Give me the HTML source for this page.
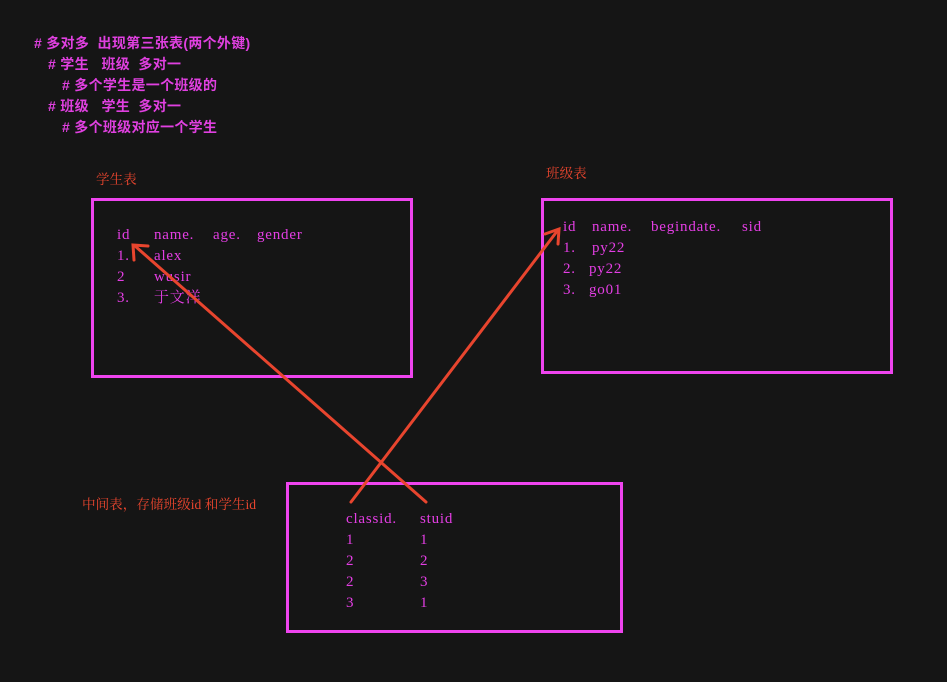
<!DOCTYPE html>
<html><head><meta charset="utf-8"><style>
body{margin:0;width:947px;height:682px;background:#151515;position:relative;overflow:hidden;font-family:"Liberation Serif","Noto Serif CJK SC",serif;}
.t{position:absolute;color:#e43ee4;font-size:15px;letter-spacing:0.8px;white-space:pre;line-height:16px;}
.c{position:absolute;color:#e040e0;font-size:14px;white-space:pre;line-height:16px;font-family:"Liberation Sans","Noto Sans CJK SC",sans-serif;font-weight:bold;letter-spacing:0.3px}
.r{position:absolute;color:#e8452e;font-size:13.6px;white-space:pre;line-height:16px;font-family:"Liberation Serif","Noto Serif CJK SC",serif;}
.box{position:absolute;border:3px solid #ee44ee;box-sizing:border-box;}
</style></head><body>
<div class="c" style="left:34px;top:35px"># 多对多  出现第三张表(两个外键)</div>
<div class="c" style="left:48px;top:56px"># 学生   班级  多对一</div>
<div class="c" style="left:62px;top:77px"># 多个学生是一个班级的</div>
<div class="c" style="left:48px;top:98px"># 班级   学生  多对一</div>
<div class="c" style="left:62px;top:119px"># 多个班级对应一个学生</div>

<div class="r" style="left:96px;top:172px">学生表</div>
<div class="r" style="left:546px;top:166px">班级表</div>
<div class="r" style="left:82px;top:497px">中间表，存储班级id 和学生id</div>

<div class="box" style="left:91px;top:198px;width:322px;height:180px"></div>
<div class="box" style="left:541px;top:198px;width:352px;height:176px"></div>
<div class="box" style="left:286px;top:482px;width:337px;height:151px"></div>

<div class="t" style="left:117px;top:227px">id</div>
<div class="t" style="left:154px;top:227px">name.</div>
<div class="t" style="left:213px;top:227px">age.</div>
<div class="t" style="left:257px;top:227px">gender</div>
<div class="t" style="left:117px;top:248px">1.</div><div class="t" style="left:154px;top:248px">alex</div>
<div class="t" style="left:117px;top:269px">2</div><div class="t" style="left:154px;top:269px">wusir</div>
<div class="t" style="left:117px;top:290px">3.</div><div class="t" style="left:154px;top:290px">于文洋</div>

<div class="t" style="left:563px;top:219px">id</div>
<div class="t" style="left:592px;top:219px">name.</div>
<div class="t" style="left:651px;top:219px">begindate.</div>
<div class="t" style="left:742px;top:219px">sid</div>
<div class="t" style="left:563px;top:240px">1.</div><div class="t" style="left:592px;top:240px">py22</div>
<div class="t" style="left:563px;top:261px">2.</div><div class="t" style="left:589px;top:261px">py22</div>
<div class="t" style="left:563px;top:282px">3.</div><div class="t" style="left:589px;top:282px">go01</div>

<div class="t" style="left:346px;top:511px">classid.</div><div class="t" style="left:420px;top:511px">stuid</div>
<div class="t" style="left:346px;top:532px">1</div><div class="t" style="left:420px;top:532px">1</div>
<div class="t" style="left:346px;top:553px">2</div><div class="t" style="left:420px;top:553px">2</div>
<div class="t" style="left:346px;top:574px">2</div><div class="t" style="left:420px;top:574px">3</div>
<div class="t" style="left:346px;top:595px">3</div><div class="t" style="left:420px;top:595px">1</div>

<svg width="947" height="682" style="position:absolute;left:0;top:0">
<g stroke="#e8452e" stroke-width="3" fill="none" stroke-linecap="round">
<line x1="426" y1="502" x2="135" y2="246"/>
<polyline points="134,260 133,245 148,246"/>
<line x1="351" y1="502" x2="558" y2="230"/>
<polyline points="545,234 559,229 558,244"/>
</g>
</svg>
</body></html>
